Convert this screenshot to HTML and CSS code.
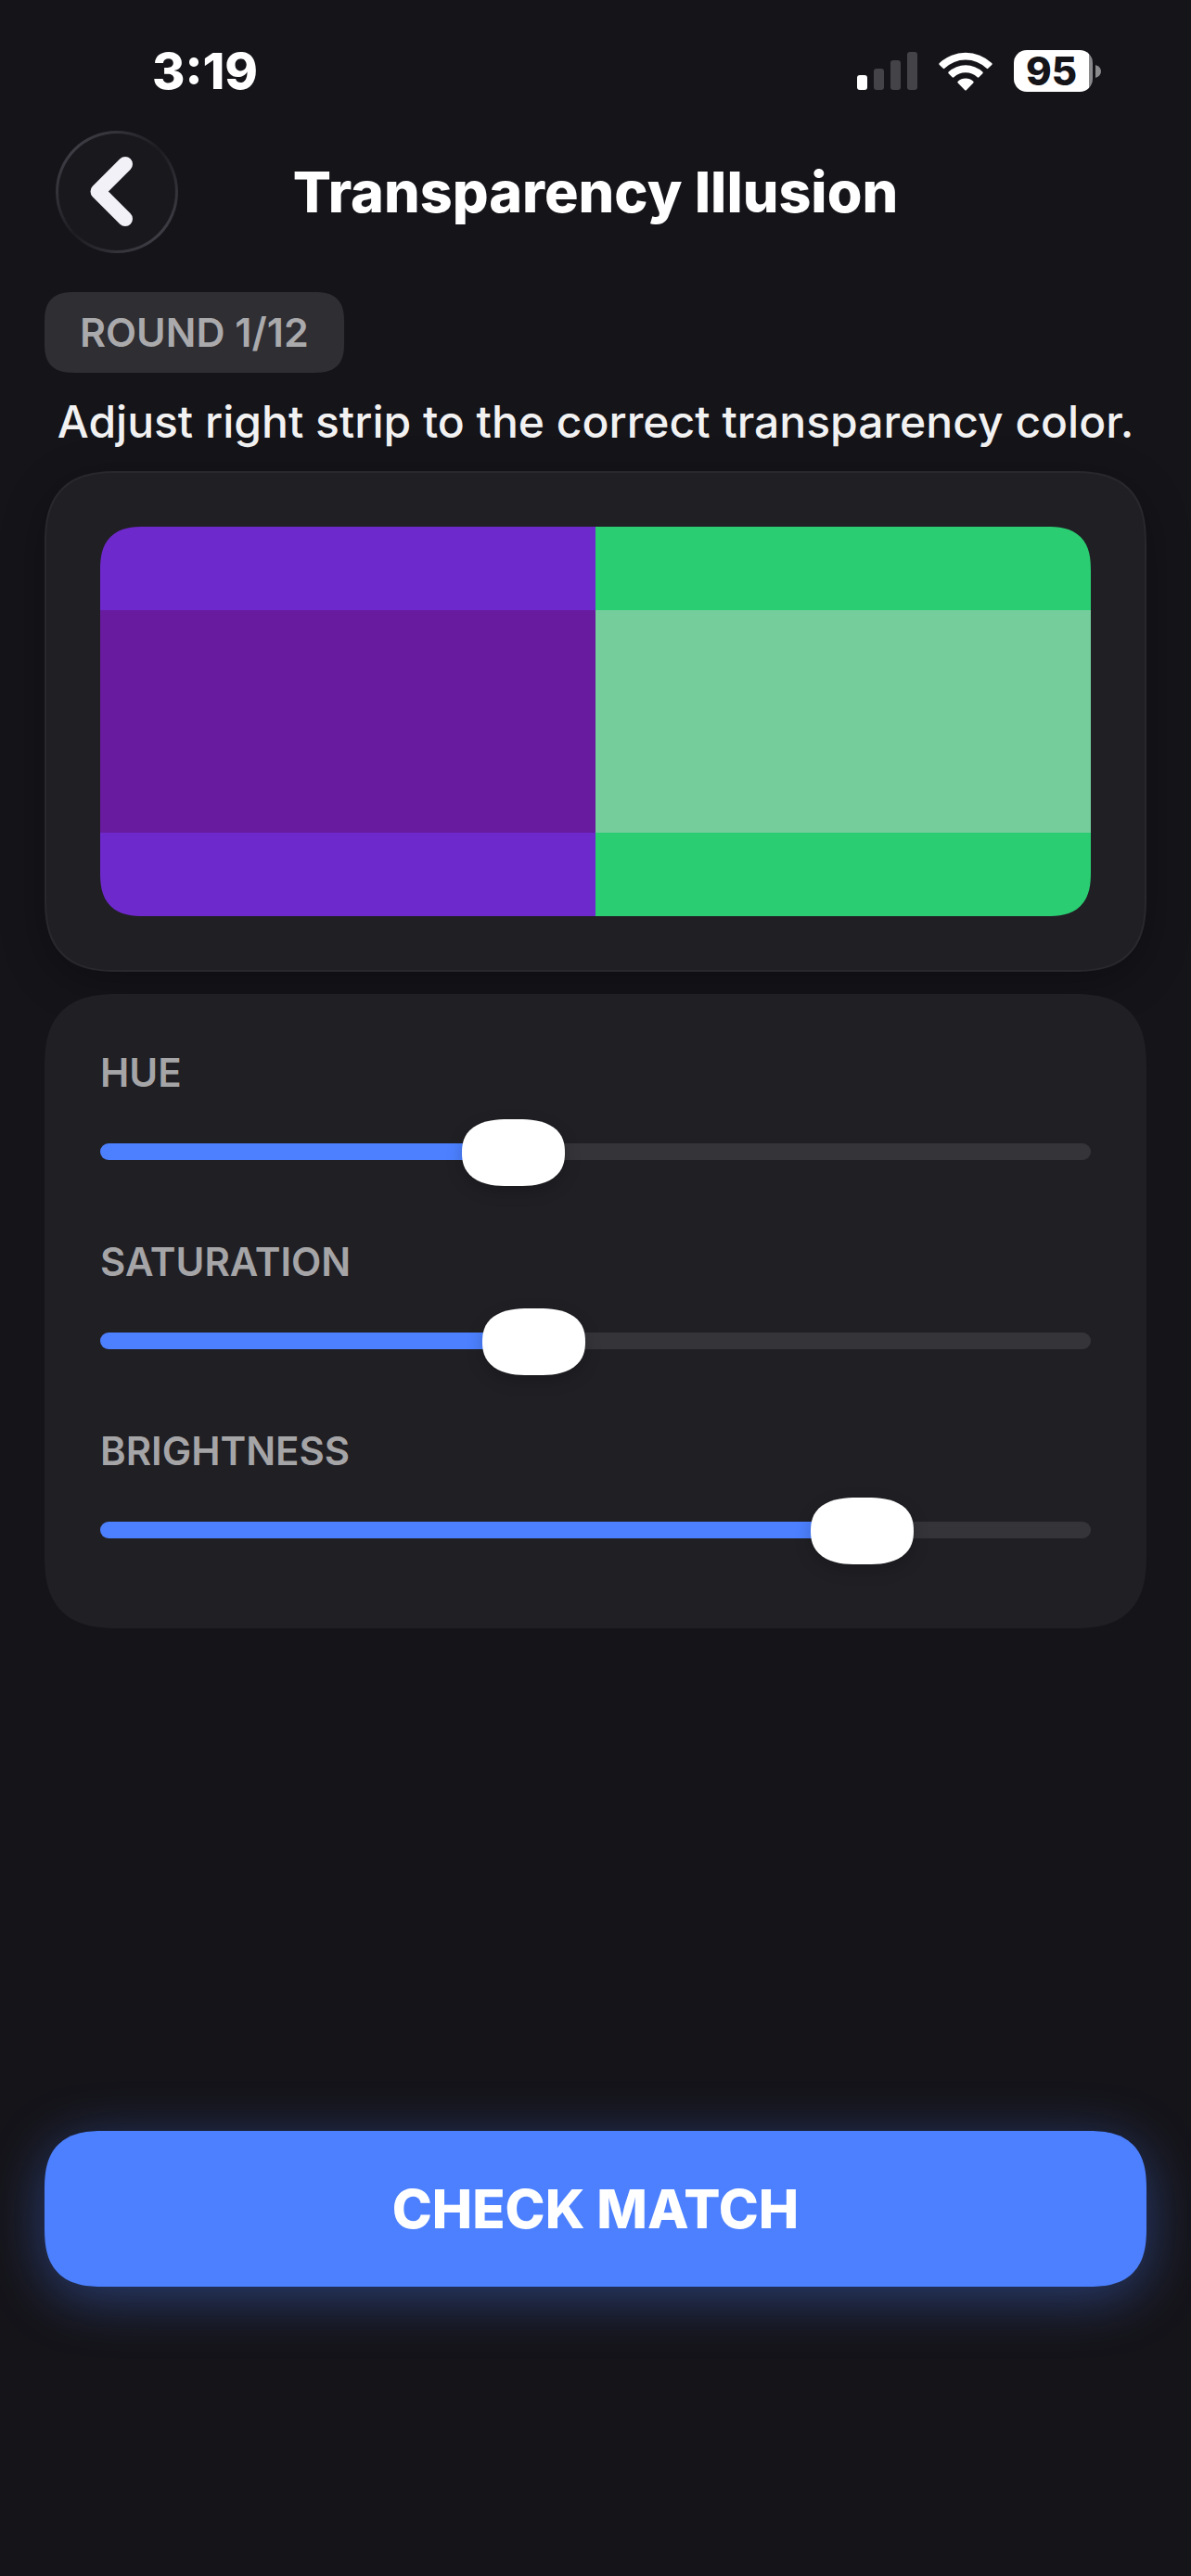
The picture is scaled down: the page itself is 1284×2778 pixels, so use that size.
FILE: index.html
```html
<!DOCTYPE html>
<html lang="en">
<head>
    <meta charset="UTF-8">
    <meta name="viewport" content="width=device-width, initial-scale=1.0">
    <title>Transparency Illusion</title>
    <link rel="stylesheet" href="styles.css">
</head>
<body>
    <div class="status-bar">
        <span class="time">3:19</span>
        <div class="status-icons">
            <svg class="signal" width="65" height="41" viewBox="0 0 65 41" fill="#444347" aria-hidden="true">
                <rect x="0" y="25" width="11" height="16" rx="3" fill="#fff"/>
                <rect x="18" y="18" width="11" height="23" rx="3"/>
                <rect x="36" y="9" width="11" height="32" rx="3"/>
                <rect x="54" y="0" width="11" height="41" rx="3"/>
            </svg>
            <svg class="wifi" width="58" height="42" viewBox="0 0 58 42" fill="#fff" aria-hidden="true">
                <path d="M.8 12Q-.2 13 .8 14L4.800 17.800Q5.500 18.500 6.300 17.800A32.500 32.500 0 0 1 51.700 17.800Q52.500 18.500 53.200 17.800L57.200 14Q58.200 13 57.200 12A41 41 0 0 0 .8 12Z"/>
                <path d="M10.600 21.600Q9.800 22.500 10.600 23.300L14.600 27.300Q15.400 28.200 16.400 27.300A18.500 18.500 0 0 1 41.600 27.300Q42.600 28.200 43.400 27.300L47.400 23.300Q48.200 22.500 47.400 21.600A27 27 0 0 0 10.600 21.600Z"/>
                <path d="M20.700 31.700Q19.800 32.600 20.700 33.500L28 41Q29 42 30 41L37.300 33.500Q38.200 32.600 37.300 31.700A12.500 12.500 0 0 0 20.700 31.700Z"/>
            </svg>
            <div class="battery">
                <span class="battery-level">95</span>
                <svg class="battery-cap" width="6" height="14" viewBox="0 0 6 14" aria-hidden="true">
                    <path d="M0 0Q6 2 6 7T0 14Z" fill="#8a898c"/>
                </svg>
            </div>
        </div>
    </div>

    <header class="header">
        <button class="back-button" aria-label="Back">
            <svg width="46" height="76" viewBox="0 0 46 76" aria-hidden="true">
                <path d="M38 8L8.500 37.500L38 67" fill="none" stroke="#f2f1f7" stroke-width="16" stroke-linecap="round" stroke-linejoin="round"/>
            </svg>
        </button>
        <h1>Transparency Illusion</h1>
    </header>

    <main class="game">
        <div class="round">ROUND 1/12</div>
        <p class="hint">Adjust right strip to the correct transparency color.</p>

        <section class="card preview">
            <div class="swatches">
                <div class="swatch purple"><div class="strip"></div></div>
                <div class="swatch green"><div class="strip"></div></div>
            </div>
        </section>

        <section class="card controls">
            <div class="control">
                <label for="hue">HUE</label>
                <input type="range" id="hue" min="0" max="1000" value="408" style="--value: 0.408">
            </div>
            <div class="control">
                <label for="saturation">SATURATION</label>
                <input type="range" id="saturation" min="0" max="1000" value="430" style="--value: 0.43">
            </div>
            <div class="control">
                <label for="brightness">BRIGHTNESS</label>
                <input type="range" id="brightness" min="0" max="1000" value="800" style="--value: 0.8">
            </div>
        </section>

        <button class="check-button">CHECK MATCH</button>
    </main>

    <script>
        // Keep the filled part of each track under its thumb
        document.querySelectorAll('input[type="range"]').forEach(slider => {
            slider.addEventListener('input', () => {
                slider.style.setProperty('--value', slider.value / slider.max);
            });
        });
    </script>
</body>
</html>
```
FILE: styles.css
```css
* {
    margin: 0;
    padding: 0;
    box-sizing: border-box;
}

body {
    font-family: Inter, "Liberation Sans", sans-serif;
    background: #151419;
    color: #fff;
    min-height: 100vh;
    display: flex;
    flex-direction: column;
}

button {
    font-family: inherit;
    border: none;
    cursor: pointer;
}

.status-bar {
    display: flex;
    justify-content: space-between;
    align-items: center;
    height: 141px;
    padding: 12px 97px 0 164px;
}

.time {
    font-size: 54px;
    font-weight: 800;
}

.status-icons {
    display: flex;
    align-items: center;
    gap: 23px;
}

.battery {
    display: flex;
    align-items: center;
    gap: 3px;
}

.battery-level {
    width: 85px;
    height: 45px;
    padding-right: 4px;
    border-radius: 14px;
    background: linear-gradient(90deg, #fff 81px, #8a898c 81px);
    color: #151419;
    font-size: 42px;
    font-weight: 800;
    line-height: 45px;
    text-align: center;
}

.header {
    display: grid;
    grid-template-columns: 132px 1fr 132px;
    align-items: center;
    padding: 0 60px;
}

.header h1 {
    font-size: 61px;
    font-weight: 800;
    line-height: 74px;
    text-align: center;
}

.back-button {
    width: 132px;
    height: 132px;
    padding-right: 12px;
    display: flex;
    align-items: center;
    justify-content: center;
    border: 3px solid transparent;
    border-radius: 50%;
    background:
        linear-gradient(#19181d, #19181d) padding-box,
        conic-gradient(#34333a, #1d1c21 45deg, #34333a 90deg, #3e3d45 135deg, #34333a 180deg, #1d1c21 225deg, #34333a 270deg, #3e3d45 315deg, #34333a) border-box;
}

.game {
    flex: 1;
    display: flex;
    flex-direction: column;
    padding: 42px 48px 312px;
}

.round {
    align-self: flex-start;
    padding: 18px 38px;
    border-radius: 24px;
    background: #2f2e33;
    color: #aaaaac;
    font-size: 43px;
    font-weight: 600;
    line-height: 51px;
}

.hint {
    margin: 24px 0;
    color: #f2f2f2;
    font-size: 48px;
    font-weight: 500;
    line-height: 58px;
    text-align: center;
}

.card {
    border-radius: 60px;
    background: #201f24;
}

.preview {
    padding: 58px;
    border: 2px solid #29282d;
    box-shadow: 0 12px 48px rgba(0, 0, 0, 0.3);
}

.swatches {
    display: flex;
    height: 420px;
    border-radius: 36px;
    overflow: hidden;
}

.swatch {
    flex: 1;
    display: flex;
    align-items: center;
}

.strip {
    width: 100%;
    height: 240px;
}

.purple {
    background: #6e29cc;
}

.purple .strip {
    background: #681b9f;
}

.green {
    background: #2acd72;
}

.green .strip {
    background: #75cd9c;
}

.controls {
    display: flex;
    flex-direction: column;
    gap: 58px;
    margin: 24px 0;
    padding: 60px 60px 70px;
    position: relative;
}

.control {
    display: flex;
    flex-direction: column;
    gap: 24px;
}

.control label {
    color: #a5a5a7;
    font-size: 42px;
    font-weight: 600;
    line-height: 50px;
}

input[type="range"] {
    --fill: calc(56px + (100% - 112px) * var(--value));
    -webkit-appearance: none;
    appearance: none;
    width: 100%;
    height: 72px;
    background: transparent;
}

input[type="range"]::-webkit-slider-runnable-track {
    height: 18px;
    border-radius: 9px;
    background: linear-gradient(90deg, #4c80ff var(--fill), #353439 var(--fill));
}

input[type="range"]::-webkit-slider-thumb {
    -webkit-appearance: none;
    width: 111px;
    height: 72px;
    margin-top: -26px;
    border-radius: 36px;
    background: #fff;
    box-shadow: 0 6px 18px rgba(0, 0, 0, 0.2);
}

.check-button {
    height: 168px;
    margin-top: auto;
    border-radius: 48px;
    background: #4c80ff;
    box-shadow: 0 12px 60px rgba(76, 128, 255, 0.4);
    color: #fff;
    font-size: 58px;
    font-weight: 800;
}

/* Smoother corners where the browser can draw them */
@supports (corner-shape: squircle) {
    .round,
    .card,
    .swatches,
    .check-button {
        corner-shape: superellipse(1.4);
    }

    .round {
        border-radius: 32px;
    }

    .card {
        border-radius: 80px;
    }

    .swatches {
        border-radius: 48px;
    }

    .check-button {
        border-radius: 64px;
    }

    input[type="range"]::-webkit-slider-thumb {
        border-radius: 50px / 36px;
        corner-shape: superellipse(1.3);
    }
}
```
